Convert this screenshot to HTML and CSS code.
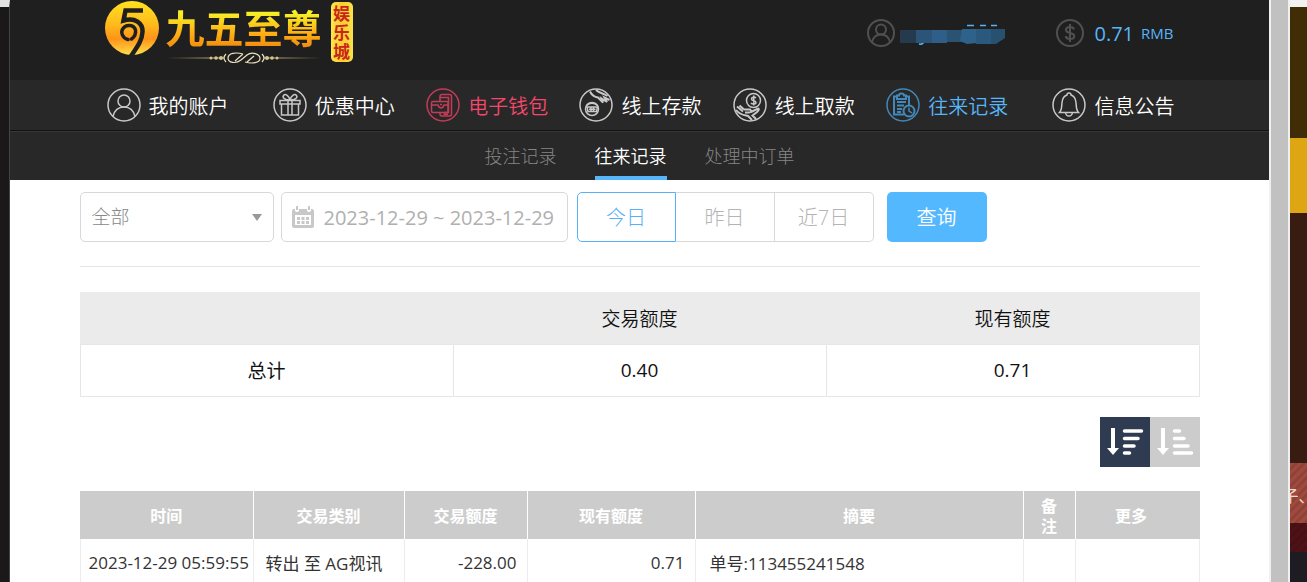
FILE: index.html
```html
<!DOCTYPE html>
<html lang="zh-CN">
    <head>
        <meta charset="utf-8" />
        <title>往来记录</title>

        <link rel="stylesheet" href="styles.css">
    </head>

    <body>
        <div class="edge-left"></div>

        <div class="panel">
            <header class="top">
                <div class="inner top-inner">
                    <div class="logo">
                        <svg class="logo-ball" viewBox="0 0 54 54">
                            <defs>
                                <linearGradient id="gold" x1="0" y1="0" x2="0" y2="1">
                                    <stop offset="0" stop-color="#ffe21f" />
                                    <stop offset="0.45" stop-color="#ffb81c" />
                                    <stop offset="0.7" stop-color="#ff9318" />
                                    <stop offset="1" stop-color="#ffe04a" />
                                </linearGradient>
                            </defs>
                            <circle cx="27" cy="27" r="27" fill="url(#gold)" />
                            <path d="M38 9.500H20.500L18.500 19.500C30 16 38 22 37.500 31C37 40 32 46 26 55" fill="none" stroke="#1f1f1f" stroke-width="4.500" />
                            <path d="M23 38.500C17 37 15.500 31 18 27.500C21 23 29 23.500 30.500 29C31 33 29.500 36 26.500 38" fill="none" stroke="#1f1f1f" stroke-width="3.500" stroke-linecap="round" />
                        </svg>
                        <div class="logo-name">
                            <span class="logo-text">九五至尊</span>
                            <svg class="logo-line" viewBox="0 0 156 12">
                                <defs>
                                    <linearGradient id="fade">
                                        <stop offset="0" stop-color="#c9ae70" stop-opacity="0" />
                                        <stop offset="0.35" stop-color="#d8c48c" />
                                        <stop offset="0.65" stop-color="#d8c48c" />
                                        <stop offset="1" stop-color="#c9ae70" stop-opacity="0" />
                                    </linearGradient>
                                </defs>
                                <path d="M0 5.500H58V6.500H0zM98 5.500H156V6.500H98z" fill="url(#fade)" />
                                <g fill="#d8c48c">
                                    <circle cx="45" cy="6" r="1.500" /><circle cx="50" cy="6" r="1.800" /><circle cx="55" cy="6" r="2" />
                                    <circle cx="101" cy="6" r="2" /><circle cx="106" cy="6" r="1.800" /><circle cx="111" cy="6" r="1.500" />
                                </g>
                                <g fill="none" stroke="#ece2bd" stroke-width="1.200">
                                    <path d="M60 2Q56 6 60 10M96 2Q100 6 96 10" />
                                    <path d="M77 2C70 0 62 1 62 6S70 12 75 8L81 3C86 -1 94 2 94 6.500S86 12 79 10M69 9L77 2M81 10L88 4" />
                                </g>
                            </svg>
                        </div>
                        <div class="logo-tag">娱乐城</div>
                    </div>

                    <div class="account">
                        <div class="user">
                            <svg class="small-icon" viewBox="0 0 28 28">
                                <circle cx="14" cy="14" r="13" />
                                <circle cx="14" cy="10.500" r="5" />
                                <path d="M5 23.500C6 18 9.500 15.500 14 15.500S22 18 23 23.500" />
                            </svg>
                            <svg class="user-mask" viewBox="0 0 108 22">
                                <path d="M67 1.500h7M80 1.500h6M91 1.500h6M19 20q4 1 5-3" stroke="#57b2f7" stroke-width="1.500" fill="none" />
                                <path d="M0 6h17v13H0z" fill="#253a4d" />
                                <path d="M16 6h16v13H16z" fill="#2c5478" />
                                <path d="M32 6h15v13H32z" fill="#2d5f88" />
                                <path d="M47 6h16v12H47z" fill="#2c5272" />
                                <path d="M62 5h15v14l-10 1-7-3z" fill="#2f628a" />
                                <path d="M76 5h16v15H76z" fill="#2b597e" />
                                <path d="M91 5h14v9l-9 6h-5z" fill="#28506f" />
                            </svg>
                        </div>
                        <div class="balance">
                            <svg class="small-icon" viewBox="0 0 28 28">
                                <circle cx="14" cy="14" r="13" />
                                <path d="M18 10.500C17.500 8.500 16 8 14 8C11.500 8 10 9.300 10 11C10 15 18.300 13 18.300 17C18.300 19 16.500 20 14 20C11.500 20 10 19 9.700 17M14 5V23" stroke-width="2" />
                            </svg>
                            <span class="amount">0.71</span>
                            <span class="unit">RMB</span>
                        </div>
                    </div>
                </div>
            </header>

            <nav class="main-nav">
                <div class="inner main-nav-inner">
                    <a href="#">
                        <svg viewBox="0 0 34 34">
                            <circle cx="17" cy="17" r="16" />
                            <circle cx="17" cy="13" r="6" />
                            <path d="M6 28.500C7.500 22 11.500 19 17 19S26.500 22 28 28.500" />
                        </svg>
                        我的账户
                    </a>
                    <a href="#">
                        <svg viewBox="0 0 34 34">
                            <circle cx="17" cy="17" r="16" />
                            <path d="M7 12.500H27V16H7zM8.500 16V27H25.500V16M15 12.500V27M19 12.500V27M17 12C12 12 9 10 10.500 7.500C12.500 5 16 8 17 12C18 8 21.500 5 23.500 7.500C25 10 22 12 17 12" />
                        </svg>
                        优惠中心
                    </a>
                    <a href="#" class="wallet">
                        <svg viewBox="0 0 34 34">
                            <circle cx="17" cy="17" r="16" />
                            <path d="M14 13V8.500Q14 6.500 16 6.500H23.500Q25.500 6.500 25.500 8.500V26Q25.500 28 23.500 28H16Q14 28 14 26V25M14 9.500H22.500V24.500H18M17.500 26.300H22" />
                            <path d="M7 13.500H22V24.500H7Q5.500 24.500 5.500 23V15Q5.500 13.500 7 13.500zM5.500 17H12Q13 20 15 20T18 17H22M14 16.500H16" />
                        </svg>
                        电子钱包
                    </a>
                    <a href="#">
                        <svg viewBox="0 0 34 34">
                            <circle cx="17" cy="17" r="16" />
                            <circle cx="13" cy="21" r="6.500" />
                            <path d="M8 19H18.500L17.500 23.500H9zM10 21.300H16.500M12 19V23M14.500 19V23M7.500 17.500Q13 13 18.500 17.500" />
                            <path d="M11 3.500C13 7.500 15 9 19 9.500L24 14.500L22.500 10.500L28 14L25.500 9.500L30.500 12M17 2C20 5 24 5 28.500 8" stroke-width="2" />
                        </svg>
                        线上存款
                    </a>
                    <a href="#">
                        <svg viewBox="0 0 34 34">
                            <circle cx="17" cy="17" r="16" />
                            <circle cx="20.500" cy="12.500" r="7" />
                            <path d="M23 10C21.500 8.500 18.500 9 18.500 11S23 12.500 23 14.500S19 16.500 18 15M20.800 7.500V17.500" />
                            <path d="M4 18.500L10 23.500M6.500 17.500L11 21.500M3 22C7 27 11 27 15 28L19 32M11 21.500H17Q20 24 16 24.500H12M18 24L25 20.500Q27 21 24 24L19.500 27.500L23 31" stroke-width="2" />
                        </svg>
                        线上取款
                    </a>
                    <a href="#" class="current">
                        <svg viewBox="0 0 34 34">
                            <circle cx="17" cy="17" r="16" />
                            <path d="M18 26.500H8V8.500H11M20 8.500H23V17M11 7.500H13Q13 5.500 15.500 5.500T18 7.500H20V11H11z" stroke-width="2" />
                            <path d="M11 14H20M11 17.500H18M11 21H16M11 24H15" stroke-width="2" />
                            <circle cx="23" cy="23" r="5.500" stroke-width="2" />
                            <path d="M23 19.500V23L26 25" />
                        </svg>
                        往来记录
                    </a>
                    <a href="#">
                        <svg viewBox="0 0 34 34">
                            <circle cx="17" cy="17" r="16" />
                            <path d="M7.500 24.500C10 22 9.500 19 10 14.500C10.500 10 12 8 15 7Q15 5 17 5T19 7C22 8 23.500 10 24 14.500C24.500 19 24 22 26.500 24.500zM13.500 24.500Q14 28 17 28T20.500 24.500" />
                        </svg>
                        信息公告
                    </a>
                </div>
            </nav>

            <nav class="sub-nav">
                <a href="#">投注记录</a>
                <a href="#" class="active">往来记录</a>
                <a href="#">处理中订单</a>
            </nav>

            <main class="inner">
                <form class="filters">
                    <div class="type-box">
                        <select class="type" aria-label="交易类别">
                            <option>全部</option>
                        </select>
                    </div>
                    <label class="date-box">
                        <svg viewBox="0 0 22 22" aria-hidden="true">
                            <path fill-rule="evenodd" d="M2 3H3V5Q5 7 7 5V3H15V5Q17 7 19 5V3H20Q22 3 22 5V20Q22 22 20 22H2Q0 22 0 20V5Q0 3 2 3zM3 9V19H19V9z" />
                            <path d="M4 0H6V4H4zM16 0H18V4H16zM5 11h3v3H5zM9.500 11h3v3h-3zM14 11h3v3h-3zM5 15h3v3H5zM9.500 15h3v3h-3zM14 15h3v3h-3z" />
                        </svg>
                        <input type="text" value="2023-12-29 ~ 2023-12-29" aria-label="日期">
                    </label>
                    <div class="days">
                        <button type="button" class="on">今日</button>
                        <button type="button">昨日</button>
                        <button type="button">近7日</button>
                    </div>
                    <button type="button" class="search">查询</button>
                </form>

                <table class="summary">
                    <thead>
                        <tr>
                            <th></th>
                            <th>交易额度</th>
                            <th>现有额度</th>
                        </tr>
                    </thead>
                    <tbody>
                        <tr>
                            <td>总计</td>
                            <td>0.40</td>
                            <td>0.71</td>
                        </tr>
                    </tbody>
                </table>

                <div class="sort">
                    <button type="button" class="on" aria-label="降序">
                        <svg viewBox="0 0 50 50">
                            <path d="M11 11H15V31H19L13 38L7 31H11z" />
                            <path d="M24.500 14H41.500M24.500 21.500H38M24.500 29H34M24.500 36H29.500" class="bars" />
                        </svg>
                    </button>
                    <button type="button" aria-label="升序">
                        <svg viewBox="0 0 50 50">
                            <path d="M11 11H15V31H19L13 38L7 31H11z" />
                            <path d="M24.500 14H29.500M24.500 21.500H34M24.500 29H38M24.500 36H41.500" class="bars" />
                        </svg>
                    </button>
                </div>

                <table class="records">
                    <colgroup>
                        <col class="c-time">
                        <col class="c-type">
                        <col class="c-amount">
                        <col class="c-balance">
                        <col class="c-summary">
                        <col class="c-note">
                        <col class="c-more">
                    </colgroup>
                    <thead>
                        <tr>
                            <th>时间</th>
                            <th>交易类别</th>
                            <th>交易额度</th>
                            <th>现有额度</th>
                            <th>摘要</th>
                            <th>备注</th>
                            <th>更多</th>
                        </tr>
                    </thead>
                    <tbody>
                        <tr>
                            <td class="time">2023-12-29 05:59:55</td>
                            <td>转出 至 AG视讯</td>
                            <td class="num">-228.00</td>
                            <td class="num">0.71</td>
                            <td class="order">单号:113455241548</td>
                            <td></td>
                            <td></td>
                        </tr>
                    </tbody>
                </table>
            </main>
        </div>

        <div class="scroll"></div>

        <div class="edge-right">
            <div class="band-brown"></div>
            <div class="band-gold"></div>
            <div class="band-dark"></div>
            <div class="band-red"><span>子、</span></div>
            <div class="band-wine"></div>
        </div>
    </body>
</html>
```

FILE: styles.css
```css
* {
    margin: 0;
    padding: 0;
    box-sizing: border-box;
}

body {
    display: flex;
    height: 100vh;
    overflow: hidden;
    background: #fff;
    font-family: "Open Sans", "Noto Sans CJK SC", sans-serif;
    font-size: 16px;
    color: #333;
}

a {
    text-decoration: none;
}

button,
input,
select {
    font-family: inherit;
    font-size: 20px;
}

/* Page behind the window
=============================================== */
.edge-left {
    flex: 0 0 10px;
    background: #1b1819;
    border-top: 7px solid #e4e4e4;
    border-right: 1px solid #444;
}

.edge-right {
    flex: 0 0 17px;
    overflow: hidden;
    background: #1c1c22;
    border-top: 7px solid #f2f3f1;
}

.band-brown {
    height: 131px;
    background: #402d06;
}

.band-gold {
    height: 75px;
    background: #dea613;
}

.band-dark {
    height: 250px;
    background: #381b11;
}

.band-red {
    display: flex;
    justify-content: center;
    align-items: center;
    height: 60px;
    padding-top: 4px;
    background: repeating-linear-gradient(135deg, #a3483c 0 3px, #8c4438 3px 6px);
    color: #f0d8d2;
    white-space: nowrap;
}

.band-wine {
    height: 29px;
    background: repeating-linear-gradient(135deg, #521014 0 3px, #421316 3px 6px);
}

.scroll {
    flex: 0 0 21px;
    background: #c1c1c1;
    border: solid #f0f0f0;
    border-width: 0 2px;
}

/* Header
=============================================== */
.panel {
    flex: 1;
    min-width: 0;
}

.inner {
    max-width: 1120px;
    margin: 0 auto;
}

.top {
    height: 80px;
    background: #1f1f1f;
}

.top-inner {
    display: flex;
    justify-content: space-between;
    padding: 0 26px 0 25px;
}

.logo {
    display: flex;
    gap: 7px;
}

.logo-ball {
    width: 54px;
    height: 54px;
    margin-top: 1px;
}

.logo-name {
    display: flex;
    flex-direction: column;
    padding-top: 4px;
}

.logo-text {
    font-size: 39px;
    font-weight: 700;
    line-height: 48px;
    background: linear-gradient(#f6ee27 20%, #ffb014 60%, #f08c10 90%);
    background-clip: text;
    -webkit-background-clip: text;
    color: transparent;
}

.logo-line {
    width: 156px;
    height: 12px;
}

.logo-tag {
    width: 22px;
    height: 60px;
    margin: 2px 0 0 2px;
    padding-top: 2px;
    border-radius: 5px;
    background: linear-gradient(90deg, #f9e64e, #ffcb2e 50%, #f7e348);
    color: #c8261a;
    font-size: 17px;
    font-weight: 700;
    line-height: 19px;
    text-align: center;
}

.account {
    display: flex;
    gap: 48px;
    height: 66px;
    color: #57b5fa;
}

.user,
.balance {
    display: flex;
    align-items: center;
}

.small-icon {
    width: 28px;
    height: 28px;
    fill: none;
    stroke: #505050;
    stroke-width: 2;
}

.user-mask {
    width: 108px;
    height: 22px;
    margin: 4px 0 0 5px;
}

.amount {
    margin: 0 7px 0 10px;
    font-size: 20px;
}

.unit {
    font-size: 15px;
}

/* Main navigation
=============================================== */
.main-nav {
    background: #282828;
    border-bottom: 1px solid #111;
}

.main-nav-inner {
    display: flex;
    justify-content: space-between;
    align-items: center;
    height: 50px;
    padding: 0 25px 0 27px;
}

.main-nav a {
    display: flex;
    align-items: center;
    gap: 8px;
    color: #fff;
    font-size: 20px;
    font-weight: 350;
    white-space: nowrap;
}

.main-nav a:first-child {
    margin-right: 13px;
}

.main-nav a:last-child {
    margin-left: 13px;
}

.main-nav svg {
    width: 34px;
    height: 34px;
    fill: none;
    stroke: #c8c8c8;
    stroke-width: 1.5;
}

.main-nav .wallet {
    color: #f5476b;
}

.main-nav .wallet svg {
    stroke: #c23c58;
}

.main-nav .current {
    color: #57b5fa;
}

.main-nav .current svg {
    stroke: #4388ba;
}

.sub-nav {
    display: flex;
    justify-content: center;
    gap: 38px;
    height: 49px;
    background: #282828;
    border-top: 1px solid #373737;
}

.sub-nav a {
    color: #858585;
    font-size: 18px;
    font-weight: 300;
    line-height: 48px;
}

.sub-nav .active {
    border-bottom: 4px solid #57b5fa;
    color: #fff;
    font-weight: 350;
}

/* Filters
=============================================== */
.filters {
    display: flex;
    padding: 12px 0 24px;
    border-bottom: 1px solid #e4e4e4;
}

.type-box {
    position: relative;
    width: 194px;
    margin-right: 7px;
}

.type-box::after {
    content: "";
    position: absolute;
    top: 22px;
    right: 12px;
    border: solid transparent;
    border-width: 7px 5px 0;
    border-top-color: #999;
    pointer-events: none;
}

.type {
    appearance: none;
    width: 100%;
    height: 50px;
    padding: 0 11px;
    border: 1px solid #d8d8d8;
    border-radius: 5px;
    background: #fff;
    color: #888;
    font-size: 19px;
    font-weight: 300;
}

.date-box {
    display: flex;
    align-items: center;
    gap: 10px;
    width: 287px;
    height: 50px;
    margin-right: 9px;
    padding: 0 9px 0 10px;
    border: 1px solid #d8d8d8;
    border-radius: 5px;
}

.date-box svg {
    flex: 0 0 22px;
    height: 22px;
    fill: #c8c8c8;
}

.date-box input {
    flex: 1;
    min-width: 0;
    border: 0;
    color: #b0b0b0;
}

.days {
    display: flex;
    margin-right: 13px;
}

.days button {
    width: 99px;
    height: 50px;
    padding-bottom: 2px;
    border: 1px solid #d8d8d8;
    border-left: 0;
    background: #fff;
    color: #b4b4b4;
    font-weight: 300;
}

.days button:last-child {
    border-radius: 0 5px 5px 0;
}

.days .on {
    border: 1px solid #57b0f5;
    border-radius: 5px 0 0 5px;
    color: #57b0f5;
}

.search {
    width: 100px;
    height: 50px;
    padding-bottom: 2px;
    border: 0;
    border-radius: 5px;
    background: #54b8ff;
    color: #fff;
    font-weight: 350;
}

/* Tables
=============================================== */
table {
    width: 100%;
    border-collapse: collapse;
    table-layout: fixed;
}

.summary {
    margin-top: 25px;
    color: #111;
    font-size: 19px;
    text-align: center;
}

.summary th {
    height: 52px;
    border-right: 1px solid #ebebeb;
    background: #ebebeb;
    font-weight: 350;
}

.summary td {
    height: 52px;
    border: 1px solid #e6e6e6;
}

.sort {
    display: flex;
    justify-content: flex-end;
    padding: 20px 0 24px;
}

.sort button {
    width: 50px;
    height: 50px;
    border: 0;
    background: #ccc;
}

.sort .on {
    background: #2f3b50;
}

.sort svg {
    display: block;
    fill: #fff;
}

.sort .bars {
    stroke: #fff;
    stroke-width: 3.5;
    stroke-linecap: round;
}

.c-time {
    width: 173px;
}

.c-type {
    width: 151px;
}

.c-amount {
    width: 123px;
}

.c-balance {
    width: 168px;
}

.c-note {
    width: 52px;
}

.c-more {
    width: 124px;
}

.records th {
    height: 48px;
    padding: 2px 16px 0;
    border-right: 1px solid #fff;
    background: #ccc;
    color: #fff;
    font-weight: 700;
    line-height: 20px;
}

.records th:last-child {
    padding-right: 28px;
    border-right: 1px solid #ccc;
}

.records td {
    height: 49px;
    padding: 0 12px;
    border: 1px solid #ececec;
    border-top: 0;
    font-size: 17px;
    white-space: nowrap;
}

.records .time {
    padding: 0 4px 0 8px;
}

.records .num {
    padding-right: 10px;
    text-align: right;
}

.records .order {
    padding-left: 14px;
}
```
